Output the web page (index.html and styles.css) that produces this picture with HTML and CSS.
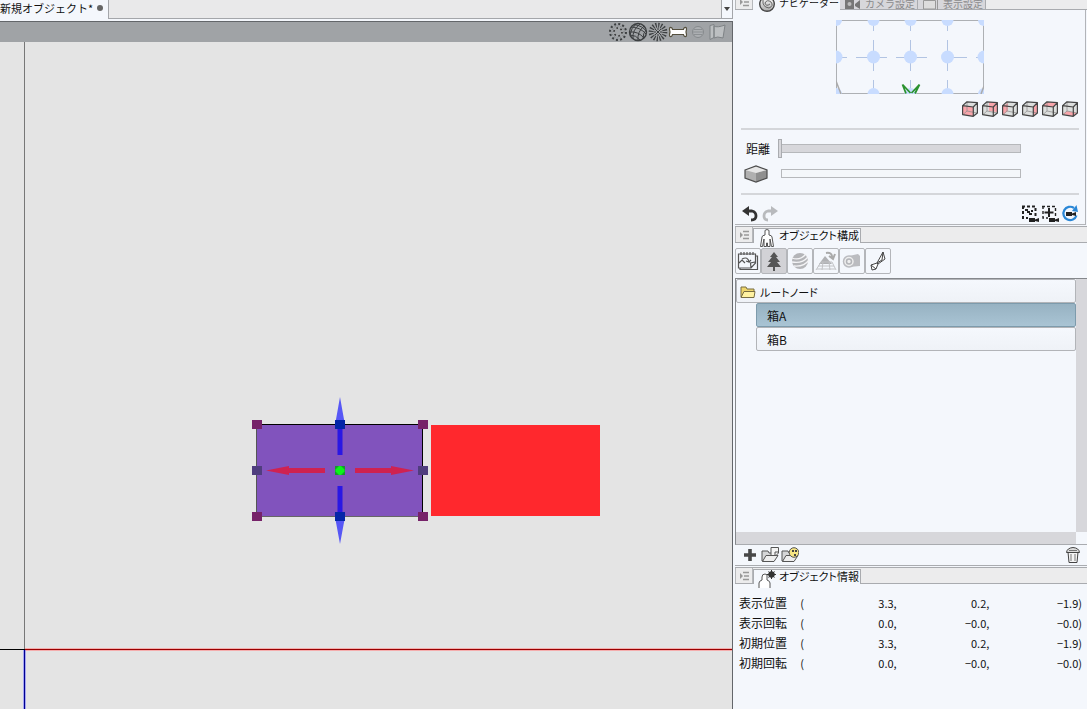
FILE: index.html
```
<!DOCTYPE html>
<html lang="ja">
<head>
<meta charset="utf-8">
<title>新規オブジェクト</title>
<link rel="stylesheet" href="styles.css">
</head>
<body>
<svg class="defs" aria-hidden="true">
  <defs>
    <g id="cube">
      <path d="M4.500 1.500 15.500 2.500 11.500 6 11 15.500 .500 13.500 .500 5Z" fill="#dcdedd"/>
      <path d="M15.500 2.500V12.500L11 15.500 11.500 6Z" fill="#dcdedd"/>
    </g>
    <g id="cube-lines" fill="none" stroke="#444" stroke-width="1.200" stroke-linejoin="round">
      <path d="M5 1V10L1 13.500M5 10 15 12" stroke="#8a8a8a" stroke-width=".7"/>
      <path d="M.600 4.600 11.300 6V15.300L.600 13.600ZM.600 4.600 5 .800 15.400 1.600 11.300 6M15.400 1.600V12L11.300 15.300"/>
    </g>
    <g id="menu-lines">
      <path d="M2 2 5 5 2 8Z" fill="#999"/>
      <path d="M5 1.500H11M6 5H11M5 8.500H11" stroke="#999" stroke-width="1.500"/>
    </g>
    <g id="folder-open">
      <path d="M1 15V5H7L8 7H13V15Z" fill="#d5d6d7" stroke="#555"/>
      <path d="M1.500 15.500 5 9.500H17L13 15.500Z" fill="#eee" stroke="#555"/>
    </g>
    <g id="camera"><path d="M0 1H6V2.500L10 1V5L6 4V5H0Z"/></g>
    <linearGradient id="silver" x1="0" y1="0" x2="0" y2="1"><stop offset="0" stop-color="#fff"/><stop offset="1" stop-color="#aaa"/></linearGradient>
  </defs>
</svg>
<div class="app">
  <main class="workspace">
    <div class="doc-tabs">
      <button class="doc-tab">新規オブジェクト*<span class="dot"></span></button>
      <button class="doc-list" aria-label="ドキュメント一覧"><svg width="6" height="4"><path d="M0 0H6L3 4Z" fill="#444"/></svg></button>
    </div>
    <div class="view">
      <div class="view-bar">
        <button aria-label="点"><svg width="20" height="20" fill="none"><circle cx="10" cy="10" r="8" stroke="#3c3f41" stroke-width="2" stroke-dasharray="2 2.190"/><circle cx="10" cy="10" r="4" stroke="#333" stroke-width="1.600" stroke-dasharray="1.600 2.590"/><circle cx="10" cy="10" r="6" stroke="#74787b" stroke-dasharray="1 2"/></svg></button>
        <button aria-label="ワイヤー"><svg width="20" height="20" fill="none" stroke="#3c3f41"><circle cx="10" cy="10" r="8.500" stroke-width="1.400"/><path d="M3 5Q12 5 18 12M1.500 10Q10 9 16 16M6 2.500Q15 4 18 9M5 17Q4 8 12 2M10 18.500Q9 10 16 4M2 13Q3 6 8 2M15 17Q15 11 18 8M2 13Q8 13 12 18"/></svg></button>
        <button aria-label="光線"><svg width="20" height="20" fill="none" stroke="#3c3f41"><circle cx="10" cy="10" r="6.800" stroke-width="5" stroke-dasharray="1.200 1.470"/><path d="M7 7 13 13M13 7 7 13M10 6V8M10 12V14M6 10H8M12 10H14"/></svg></button>
        <button aria-label="ボーン"><svg width="20" height="20"><path d="M4.500 7.500H15.500Q16 5 18 5.500 19 6.500 18 10 19 13.500 18 14.500 16 15 15.500 12.500H4.500Q4 15 2 14.500 1 13.500 2 10 1 6.500 2 5.500 4 5 4.500 7.500Z" fill="#fff" stroke="#55503f" stroke-width="1.200"/></svg></button>
        <button aria-label="球"><svg width="20" height="20"><circle cx="10" cy="10" r="5.500" fill="#acafb2" stroke="#868a8d"/><path d="M6 7.500H14M5 10H15M6 12.500H14" stroke="#8c9093"/></svg></button>
        <button aria-label="布"><svg width="20" height="20"><path d="M2 3.500 6 2.500V15.500L2 17.500ZM6 4Q9 6 17 3L15 16Q9 14 6 16Z" fill="#bcbfc1" stroke="#7f8386"/></svg></button>
      </div>
      <svg class="scene" role="img" aria-label="3Dビュー">
        <path d="M24.500 0V607" stroke="#777"/>
        <rect x="25" y="606" width="100%" height="3" fill="#f88" opacity=".6"/>
        <rect x="0" y="607" width="100%" height="1" fill="#000"/>
        <rect x="25" y="607" width="100%" height="1" fill="#900"/>
        <rect x="23" y="608" width="3" height="100%" fill="#66f" opacity=".5"/>
        <rect x="24" y="608" width="1" height="100%" fill="#00008f"/>
        <rect x="431" y="383" width="169" height="91" fill="#ff282d"/>
        <rect x="256" y="382" width="167" height="92" fill="#8153bd"/>
        <path d="M256.500 474V382" stroke="#555"/><path d="M256 474.500H423" stroke="#666"/><path d="M256 382.500H422.500V474" fill="none" stroke="#000"/>
        <g fill="#00f" fill-opacity=".62">
          <path d="M340 355 345 383H335ZM340 502 345 475H335Z"/>
          <path d="M337.500 383H342.500V413H337.500ZM337.500 444H342.500V475H337.500Z" fill="#2514e6" fill-opacity=".95"/>
        </g>
        <path d="M266 428.500 289 424V426H325V431H289V433ZM414 428.500 391 424V426H355V431H391V433Z" fill="#cf2251"/>
        <path d="M252 378h10v9h-10zM418 378h10v9h-10zM252 470h10v9h-10zM418 470h10v9h-10z" fill="#762269"/>
        <path d="M252 424h10v9h-10zM418 424h10v9h-10z" fill="#4f3d7e"/>
        <path d="M335 378h10v9h-10zM335 470h10v9h-10z" fill="#0525a8"/>
        <rect x="335" y="424" width="10" height="9" fill="#169a2c"/><path d="M339 424H341L344.500 427.500V429.500L341 433H339L335.500 429.500V427.500Z" fill="#0bf41a"/>
      </svg>
    </div>
  </main>

  <aside class="side">
    <section class="panel navigator">
      <header class="tabs tabs-cut">
        <button class="menu" aria-label="メニュー"><svg width="12" height="10"><use href="#menu-lines"/></svg></button>
        <button class="tab active"><svg class="tab-icon" width="18" height="22"><circle cx="9" cy="13" r="7.300" fill="url(#silver)" stroke="#444" stroke-width="1.400"/><path d="M5 9Q4 16 11 17 16 15 13 11 9 8 7 12 8 16 12 13" fill="none" stroke="#666"/></svg>ナビゲーター</button>
        <button class="tab idle"><svg width="18" height="14" fill="#777"><path d="M1 2H10V12H1ZM11 7 16 3V12L11 9Z"/><circle cx="5.500" cy="7" r="2" fill="#bbb"/></svg>カメラ設定</button>
        <button class="tab idle"><svg width="18" height="14"><path d="M1.500 3.500H13.500V12H1.500Z" fill="#ddd" stroke="#999"/><path d="M15.500 1V13" stroke="#999"/></svg>表示設定</button>
      </header>
      <div class="nav-body">
        <svg class="map" width="148" height="74" role="img" aria-label="カメラ位置">
          <path d="M37.500 0V11M37.500 20V51M37.500 60V74M74.500 0V11M74.500 20V51M74.500 60V74M111.500 0V11M111.500 20V51M111.500 60V74M0 37.500H11M20 37.500H51M60 37.500H91M111 37.500H131M140 37.500H148" stroke="#b2c4e3"/>
          <rect x=".5" y=".5" width="147" height="73" fill="none" stroke="#adb0b4"/>
          <g fill="#c8dcff"><circle cx="37.500" cy="37" r="6.500"/><circle cx="74.500" cy="37" r="6.500"/><circle cx="111.500" cy="37" r="6.500"/><circle cx="0" cy="37" r="6.500"/><circle cx="148" cy="37" r="6.500"/><circle cx="37.500" cy="0" r="6"/><circle cx="74.500" cy="0" r="6"/><circle cx="111.500" cy="0" r="6"/><circle cx="0" cy="0" r="6"/><circle cx="148" cy="0" r="6"/><circle cx="37.500" cy="74" r="6"/><circle cx="74.500" cy="74" r="6"/><circle cx="111.500" cy="74" r="6"/><circle cx="0" cy="74" r="6"/><circle cx="148" cy="74" r="6"/></g>
          <path d="M0 61 5 74M148 66 145 74" stroke="#aaa" stroke-width="1.500"/>
          <path d="M66.500 64.500 70 73.500M66.500 64.500 74.500 73M83.500 64.500 79 73.500M83.500 64.500 75.500 73" fill="none" stroke="#2b922f" stroke-width="1.800"/>
        </svg>
        <div class="cubes">
          <button aria-label="正面"><svg width="17" height="17"><use href="#cube"/><path d="M1 5 11 6V15L1 13.500Z" fill="#f9a5ab"/><use href="#cube-lines"/></svg></button>
          <button aria-label="背面"><svg width="17" height="17"><use href="#cube"/><path d="M7 1 15 2V11L7 10Z" fill="#f9a5ab"/><use href="#cube-lines"/></svg></button>
          <button aria-label="左"><svg width="17" height="17"><use href="#cube"/><path d="M1 5 6 2V10L1 14Z" fill="#f9a5ab"/><use href="#cube-lines"/></svg></button>
          <button aria-label="右"><svg width="17" height="17"><use href="#cube"/><path d="M11 6 15 2V12L11 15Z" fill="#f9a5ab"/><use href="#cube-lines"/></svg></button>
          <button aria-label="上"><svg width="17" height="17"><use href="#cube"/><path d="M1 5 5 1 15 2 11 6Z" fill="#f9a5ab"/><use href="#cube-lines"/></svg></button>
          <button aria-label="下"><svg width="17" height="17"><use href="#cube"/><path d="M1 13 5 10 15 12 11 15Z" fill="#f9a5ab"/><use href="#cube-lines"/></svg></button>
        </div>
        <div class="sliders">
          <label for="distance">距離</label><input id="distance" type="range" min="0" max="100" value="0">
          <label class="box" for="perspective" aria-label="パース"><svg width="24" height="18"><path d="M1 5 12 1 23 5V13L12 17 1 13Z" fill="#b0b0b0"/><path d="M12 8 23 5V13L12 17Z" fill="#8f8f8f"/><path d="M1 5 12 1 23 5 12 8Z" fill="#e6e6e6"/><path d="M1 5 12 1 23 5V13L12 17 1 13Z" fill="none" stroke="#4c4c4c" stroke-width="1.200"/></svg></label><input id="perspective" class="empty" type="range" min="0" max="100" value="0">
        </div>
        <div class="actions">
          <button aria-label="元に戻す"><svg width="18" height="16" fill="none" stroke="#333" stroke-width="2.800"><path d="M6 5H11Q15 6 15 10 15 14 10 14"/><path d="M1 5 8 0V10Z" fill="#333" stroke="none"/></svg></button>
          <button aria-label="やり直す"><svg width="18" height="16" fill="none" stroke="#b8babd" stroke-width="2.800"><path d="M12 5H7Q3 6 3 10 3 14 7 14"/><path d="M17 5 10 0V10Z" fill="#b8babd" stroke="none"/></svg></button>
          <span class="spacer"></span>
          <button aria-label="全体表示"><svg width="18" height="17"><path d="M2 1V13H7M1 1.500H14.500V11" fill="none" stroke="#222" stroke-width="2" stroke-dasharray="3 2"/><path d="M4 4H7V6H9V8H11V10H8V8H6V6H4ZM10 5H12V7H10Z" fill="#222"/><use href="#camera" x="8" y="12" fill="#222"/></svg></button>
          <button aria-label="注視"><svg width="18" height="17"><path d="M2 1V13H7M1 1.500H14.500V11" fill="none" stroke="#222" stroke-width="1.400" stroke-dasharray="3 2"/><path d="M8 3V12M3.500 7.500H12.500" stroke="#222" stroke-width="2"/><use href="#camera" x="8" y="12" fill="#222"/></svg></button>
          <button aria-label="カメラをリセット"><svg width="18" height="17"><path d="M13 3A6.700 6.700 0 1 0 15.500 10.500" fill="none" stroke="#2a87d6" stroke-width="2.200"/><path d="M15.500 0 17 7 11 6Z" fill="#2a87d6"/><use href="#camera" x="5" y="6" fill="#222"/></svg></button>
        </div>
      </div>
    </section>

    <section class="panel structure">
      <header class="tabs">
        <button class="menu" aria-label="メニュー"><svg width="12" height="10"><use href="#menu-lines"/></svg></button>
        <button class="tab active"><svg class="tab-icon" width="18" height="18" fill="#fff" stroke="#555"><path d="M2.500 17.500 4 8Q4 6.500 7 6V4Q6 .500 9 .500T11 4V6Q14 6.500 14 8L15.500 17.500H13.500L12 10V17.500H9.500V14H8.500V17.500H6V10L4.500 17.500Z"/></svg>オブジェクト構成</button>
      </header>
      <div class="tools">
        <button aria-label="シーン"><svg width="22" height="20" fill="none" stroke="#555" stroke-width="1.200"><path d="M1.500 3H18.500V12L14 17H1.500ZM3 17V18.500H20.500V5H19M4 1V4M7 1V4M10 1V4M13 1V4M16 1V4M2 12 5 9 8 12M5 8Q11 5 12 11L9 10M12 11 14 9M14 17 13.500 12 18 11"/></svg></button>
        <button class="on" aria-label="ツリー"><svg width="22" height="20" fill="#555"><path d="M11 1 15 6H13L17 11H14L18 16H12V20H10V16H4L8 11H5L9 6H7Z"/></svg></button>
        <button aria-label="マテリアル"><svg width="22" height="20"><circle cx="11" cy="10" r="8" fill="#b4b5b8"/><path d="M3 7Q11 10 17 3M3 11Q13 13 19 6M5 15Q15 16 20 9" fill="none" stroke="#f4f4f6" stroke-width="1.300"/></svg></button>
        <button aria-label="光源"><svg width="22" height="20"><path d="M4 13 10 5 17 13Z" fill="#b0b1b4"/><path d="M1 19 6 11H17L21 19M3 15H19M2 18H20M8 11 7 19M14 11 15 19" fill="none" stroke="#c2c3c6"/><path d="M11 2Q17 1 17 6M14 5 18 8 20 3" fill="none" stroke="#aaa" stroke-width="2"/></svg></button>
        <button aria-label="カメラ"><svg width="22" height="20"><path d="M8 5 17 3 19 5V15L8 16Z" fill="#bbbcc0"/><circle cx="8" cy="10.500" r="5.500" fill="#eee" stroke="#bbbcc0" stroke-width="1.500"/><circle cx="8" cy="10.500" r="2.500" fill="none" stroke="#b3b4b8" stroke-width="1.500"/></svg></button>
        <button aria-label="リボン"><svg width="22" height="20" fill="#fff" stroke="#444"><path d="M10 12 16 1 18 8 11 13ZM16 1 15 9 10 12M10 12 4 14 5 19 9 18 11 13M4 14 9 18"/></svg></button>
      </div>
      <div class="tree-box">
        <ul class="tree">
          <li><button class="node root"><svg width="16" height="14"><path d="M1 12V2H6L7 4H14V6" fill="#efd66c" stroke="#776c42"/><path d="M1 12.500 4 6.500H15L14 12.500Z" fill="#fff2a1" stroke="#776c42"/></svg>ルートノード</button>
            <ul>
              <li><button class="node selected">箱A</button></li>
              <li><button class="node">箱B</button></li>
            </ul>
          </li>
        </ul>
        <div class="vscroll"></div>
        <div class="hscroll"></div>
      </div>
      <footer class="tree-actions">
        <button aria-label="追加"><svg width="18" height="18"><path d="M9 3V15M3 9H15" stroke="#484848" stroke-width="3.600"/></svg></button>
        <button aria-label="ファイル追加"><svg width="18" height="18"><use href="#folder-open"/><path d="M10 1.500H17.500V7L15 9.500H10Z" fill="#f4f4f4" stroke="#555"/><path d="M17 6H14V9" fill="none" stroke="#555"/></svg></button>
        <button aria-label="素材追加"><svg width="18" height="18"><use href="#folder-open"/><circle cx="13" cy="6.500" r="4.800" fill="#f6e583" stroke="#555"/><path d="M11 4h2v2h-2zM14 4h2v2h-2zM13 8h2v2h-2z" fill="#444"/></svg></button>
        <span class="spacer"></span>
        <button aria-label="削除"><svg width="18" height="18"><path d="M4 6H14L13 16.500H5Z" fill="#f4f4f4" stroke="#444"/><path d="M2.500 6.500Q3 2 9 1.500 15 2 15.500 6.500Z" fill="#ddd" stroke="#444"/><path d="M7 8V15M11 8V15M5 4.500H13" stroke="#777"/></svg></button>
      </footer>
    </section>

    <section class="panel info">
      <header class="tabs">
        <button class="menu" aria-label="メニュー"><svg width="12" height="10"><use href="#menu-lines"/></svg></button>
        <button class="tab active"><svg class="tab-icon" width="18" height="18" fill="#fff" stroke="#555"><path d="M1 18V13Q1 11 4 10V7Q4 4 7 4T9 7V10Q12 11 12 13V18"/><circle cx="13.500" cy="4.500" r="2.500" fill="none" stroke="#333" stroke-width="1.500"/><path d="M13.500 0V9M9 4.500H18M10.500 1.500 16.500 7.500M16.500 1.500 10.500 7.500" stroke="#333"/></svg>オブジェクト情報</button>
      </header>
      <table class="values">
        <tbody>
          <tr><th scope="row">表示位置</th><td class="open">(</td><td>3.3,</td><td>0.2,</td><td>−1.9)</td></tr>
          <tr><th scope="row">表示回転</th><td class="open">(</td><td>0.0,</td><td>−0.0,</td><td>−0.0)</td></tr>
          <tr><th scope="row">初期位置</th><td class="open">(</td><td>3.3,</td><td>0.2,</td><td>−1.9)</td></tr>
          <tr><th scope="row">初期回転</th><td class="open">(</td><td>0.0,</td><td>−0.0,</td><td>−0.0)</td></tr>
        </tbody>
      </table>
    </section>
  </aside>
</div>
</body>
</html>
```
FILE: styles.css
```
* { box-sizing: border-box; }
body {
  margin: 0;
  overflow: hidden;
  background: #f4f7fc;
  color: #111;
  font: 11px/16px "Noto Sans CJK JP", sans-serif;
}
button {
  margin: 0;
  padding: 0;
  border: 0;
  background: none;
  color: inherit;
  font: inherit;
  text-align: left;
}
svg { display: block; flex: none; }
ul { list-style: none; margin: 0; padding: 0; }
.defs { position: absolute; width: 0; height: 0; }
.spacer { flex: 1; }

.app { display: grid; grid-template-columns: minmax(0, 1fr) 352px; height: 100vh; }
.workspace { display: flex; flex-direction: column; min-height: 0; padding-right: 2px; }
.side { display: flex; flex-direction: column; min-height: 0; }

/* Document tabs */
.doc-tabs {
  display: flex;
  justify-content: space-between;
  height: 19px;
  margin-bottom: 2px;
  border-bottom: 1px solid #a4a6aa;
  background: #e9e9ea;
}
.doc-tab {
  display: flex;
  align-items: center;
  gap: 4px;
  height: 19px;
  padding: 0 5px 3px 0;
  border-right: 1px solid #a4a6aa;
  background: #f4f7fc;
}
.dot { width: 6px; height: 6px; border-radius: 3px; background: #666; }
.doc-list {
  display: flex;
  align-items: center;
  justify-content: center;
  width: 12px;
  height: 18px;
  border: solid #a4a6aa;
  border-width: 0 1px;
  background: #f4f7fc;
}

/* Viewport */
.view {
  flex: 1;
  display: flex;
  flex-direction: column;
  min-height: 0;
  border-top: 1px solid #63666a;
  border-right: 1px solid #63666a;
}
.view-bar {
  display: flex;
  justify-content: flex-end;
  height: 20px;
  padding-right: 4px;
  background: #a0a3a6;
}
.scene { flex: 1; width: 100%; min-height: 0; background: #e4e4e4; }

/* Panels */
.tabs {
  display: flex;
  align-items: flex-end;
  height: 17px;
  border-top: 1px solid #a9abaf;
  border-bottom: 1px solid #a9abaf;
  background: #ececed;
}
.menu {
  display: flex;
  align-items: center;
  justify-content: center;
  flex: none;
  width: 18px;
  height: 15px;
  border: solid #b6b8bb;
  border-width: 0 1px;
}
.tab {
  display: flex;
  align-items: center;
  flex: none;
  height: 14px;
  white-space: nowrap;
}
.tab.active {
  gap: 3px;
  height: 15px;
  margin-bottom: -1px;
  padding: 0 1px 2px 4px;
  border: solid #a9abaf;
  border-width: 1px 1px 0;
  background: #f4f7fc;
  font-feature-settings: "palt";
}
.tab-icon { align-self: flex-start; }
.tab.idle {
  gap: 3px;
  height: 20px;
  padding: 10px 2px 0 4px;
  border-right: 1px solid #a9abaf;
  background: #d7d7db;
  color: #8a8a8c;
  font-size: 10px;
  line-height: 12px;
}
.tabs-cut { height: 10px; border-top: 0; }
.tabs-cut .tab.active {
  height: 20px;
  border: 0;
  padding: 6px 1px 0 5px;
  font-size: 10px;
  font-feature-settings: normal;
}
.tabs-cut .tab-icon { margin-top: -5px; }

.nav-body {
  display: flex;
  flex-direction: column;
  margin-right: 1px;
  padding: 10px 6px 2px;
  border: solid #b2b4b8;
  border-width: 0 1px 1px 0;
}
.map { align-self: center; }
.cubes { display: flex; justify-content: flex-end; gap: 3px; margin: 7px 0 10px; }
.sliders {
  display: grid;
  grid-template-columns: 32px minmax(0, 1fr);
  align-items: center;
  gap: 6px 0;
  padding: 9px 58px 10px 5px;
  border-top: 2px solid #d4d6da;
  border-bottom: 2px solid #d4d6da;
}
.sliders label { display: flex; align-items: center; height: 19px; font-size: 12px; }
.sliders .box { margin-left: -2px; }
input[type="range"] {
  appearance: none;
  width: 100%;
  height: 19px;
  margin: 0;
  background: none;
}
input[type="range"]::-webkit-slider-runnable-track {
  height: 9px;
  margin-left: 3px;
  border: 1px solid #b6b8bb;
  background: #d7d7db;
}
input[type="range"]::-webkit-slider-thumb {
  appearance: none;
  width: 4px;
  height: 19px;
  margin: -6px 0 0 -4px;
  border: 1px solid #aaacb0;
  background: #d7d7db;
}
input.empty::-webkit-slider-runnable-track { background: #f4f7fa; }
input.empty::-webkit-slider-thumb { visibility: hidden; }
.actions { display: flex; gap: 2px; height: 27px; padding-top: 10px; }

/* Object structure */
.structure { flex: 1; display: flex; flex-direction: column; min-height: 0; margin-top: 1px; }
.tools { display: flex; padding: 5px 0 4px; }
.tools button {
  display: grid;
  place-items: center;
  width: 26px;
  height: 26px;
  border: 1px solid #b4b6ba;
  border-radius: 2px;
}
.tools .on { background: #d2d2d6; }
.tree-box {
  flex: 1;
  display: grid;
  grid-template: minmax(0, 1fr) 12px / minmax(0, 1fr) 11px;
  min-height: 0;
  border: solid #85888c;
  border-width: 1px 0 0 1px;
  border-bottom: 1px solid #a9abaf;
}
.tree ul { margin-left: 20px; }
.node {
  display: flex;
  align-items: center;
  gap: 4px;
  width: 100%;
  height: 24px;
  padding: 2px 10px 0;
  border: 1px solid #b2b4b8;
  border-radius: 2px;
  background: linear-gradient(#f5f8fd, #eff2f7);
  font-size: 12px;
}
.node.root { padding-left: 3px; font-size: 11px; font-feature-settings: "palt"; }
.node.selected { border-color: #7d9bac; background: linear-gradient(#97b2c2, #a9c4d4); }
.vscroll, .hscroll { background: #d7d7db; }
.tree-actions { display: flex; gap: 2px; height: 20px; padding: 0 5px 0 6px; }

/* Object info */
.info { flex: 0 0 144px; border-top: 1px solid #a9abaf; padding-top: 1px; }
.values {
  width: 100%;
  margin-top: 9px;
  padding: 0 5px 0 4px;
  border-spacing: 0;
  table-layout: fixed;
}
.values tr { height: 20px; }
.values th { width: 59px; padding: 0; font-size: 12px; font-weight: 400; text-align: left; }
.values td { padding: 0; text-align: right; }
.values .open { width: 6px; }
```
